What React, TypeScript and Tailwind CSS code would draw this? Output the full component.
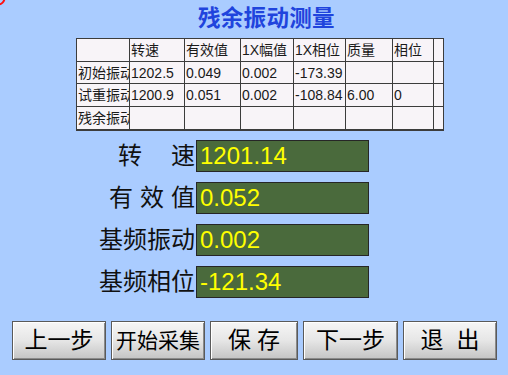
import React from 'react'

const FONT = '"Liberation Sans", "Noto Sans CJK SC", sans-serif'

const COLS = [
  'w-[53px]', 'w-[55px]', 'w-[56px]', 'w-[53px]', 'w-[52px]', 'w-[47px]', 'w-[41px]', 'w-[10px]',
]

const ROW_H = ['h-[23px]', 'h-[22px]', 'h-[23px]', 'h-[22px]']

const rows = [
  ['', '转速', '有效值', '1X幅值', '1X相位', '质量', '相位', ''],
  ['初始振动', '1202.5', '0.049', '0.002', '-173.39', '', '', ''],
  ['试重振动', '1200.9', '0.051', '0.002', '-108.84', '6.00', '0', ''],
  ['残余振动', '', '', '', '', '', '', ''],
]

const values: { label: string[]; gap: string; value: string }[] = [
  { label: ['转', '速'], gap: 'gap-[29px]', value: '1201.14' },
  { label: ['有', '效', '值'], gap: 'gap-[7px]', value: '0.052' },
  { label: ['基频振动'], gap: 'gap-0', value: '0.002' },
  { label: ['基频相位'], gap: 'gap-0', value: '-121.34' },
]

function Btn({ w, size = 'text-[23px]', gap = 'gap-0', parts }: { w: string; size?: string; gap?: string; parts: string[] }) {
  return (
    <button
      className={`${w} h-[39px] flex items-center justify-center ${gap} ${size} text-black leading-none border border-[#5a5a5a] bg-gradient-to-b from-[#f6f6f6] via-[#e6e6e6] to-[#c4c4c4] shadow-[inset_1px_1px_0_#ffffff,inset_-1px_-1px_0_#8a8a8a]`}
    >
      {parts.map((p, i) => <span key={i}>{p}</span>)}
    </button>
  )
}

export default function App() {
  return (
    <div className="relative w-[508px] h-[375px] bg-[#aaccff] overflow-hidden" style={{ fontFamily: FONT }}>
      <svg className="absolute left-0 top-0" width="12" height="12" viewBox="0 0 12 12">
        <circle cx="-2" cy="-2" r="6.5" fill="none" stroke="#ff1010" strokeWidth="2" />
      </svg>

      <div className="h-[38px] pl-[198px] pt-[6px]">
        <h1 className="text-[22.5px] font-bold leading-[26px] text-[#1f44dd] tracking-[0.3px]">残余振动测量</h1>
      </div>

      <div className="ml-[76px] w-[368px] border-l border-t border-[#3c3c3c] border-b-2 bg-[#f8f4f8]">
        {rows.map((r, ri) => (
          <div key={ri} className={`flex ${ri === 3 ? '' : 'border-b border-[#3c3c3c]'} ${ROW_H[ri]}`}>
            {r.map((c, ci) => (
              <div
                key={ci}
                className={`${COLS[ci]} shrink-0 h-full border-r border-[#3c3c3c] flex items-center pl-[1px] overflow-hidden whitespace-nowrap text-[14px] leading-none text-[#1a1a1a]`}
              >
                {c}
              </div>
            ))}
          </div>
        ))}
      </div>

      <div className="mt-[9px] flex flex-col gap-[10px]">
        {values.map((v, i) => (
          <div key={i} className="flex items-center pl-[96px]">
            <div className={`w-[100px] flex justify-end pr-[1px] ${v.gap} text-[24px] leading-none text-[#111]`}>
              {v.label.map((l, j) => <span key={j}>{l}</span>)}
            </div>
            <div className="w-[173px] h-[32px] border border-[#262626] bg-[#4a6a3c] flex items-center pl-[3px] text-[24px] leading-none text-[#ffff00]">
              {v.value}
            </div>
          </div>
        ))}
      </div>

      <div className="mt-[23px] pl-[12px] flex gap-[5px]">
        <Btn w="w-[94px]" parts={['上一步']} />
        <Btn w="w-[94px]" size="text-[21px]" parts={['开始采集']} />
        <Btn w="w-[88px]" gap="gap-[6px]" parts={['保', '存']} />
        <Btn w="w-[95px]" parts={['下一步']} />
        <Btn w="w-[94px]" gap="gap-[13px]" parts={['退', '出']} />
      </div>
    </div>
  )
}
